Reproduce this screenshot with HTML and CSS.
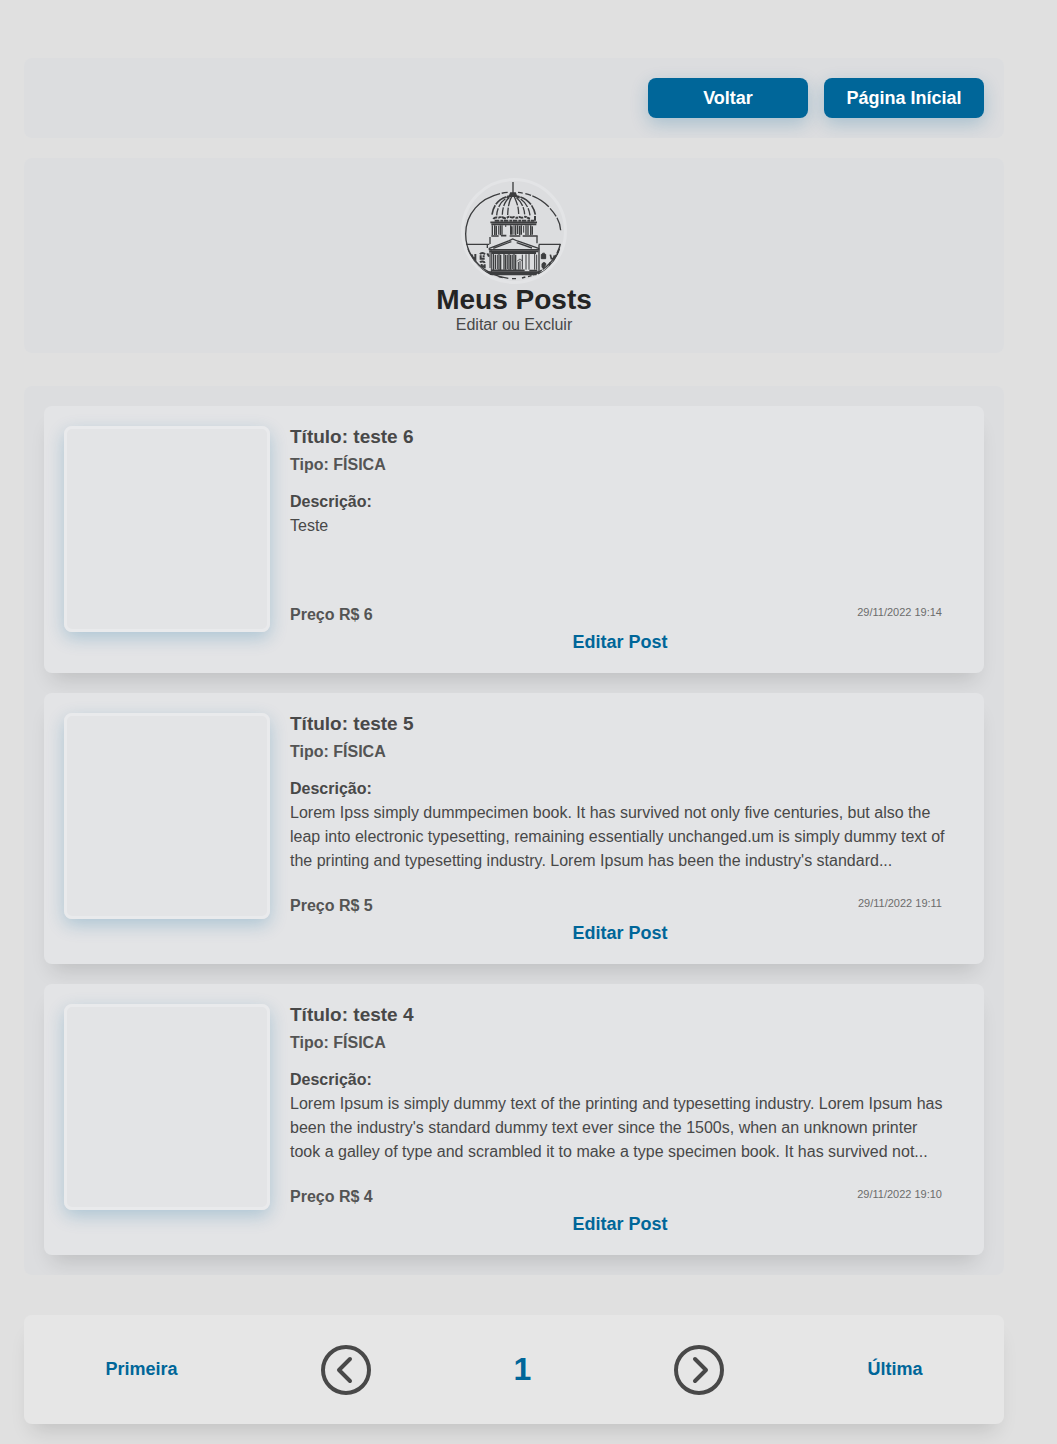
FILE: index.html
```html
<!DOCTYPE html>
<html lang="pt-BR">
<head>
  <meta charset="utf-8">
  <meta name="viewport" content="width=device-width, initial-scale=1">
  <title>Meus Posts</title>
  <link rel="stylesheet" href="styles.css">
</head>
<body>
  <div class="page">
    <nav class="panel topbar">
      <button type="button" class="button">Voltar</button>
      <button type="button" class="button">Página Inícial</button>
    </nav>

    <header class="panel hero">
      <svg class="logo" viewBox="72 63 300 300" fill="none" stroke="#3c3d3f" stroke-width="4" aria-hidden="true">
        <!-- ring -->
        <path d="M203 97C130 104 77 155 77 222C77 299 139 346 205 355" stroke-dasharray="18 5 400"/>
        <path d="M234 97C276 102 306 119 328 142" stroke-dasharray="14 8 18 4 60"/>
        <path d="M330 145C352 169 361 190 362 211M361 252C352 297 306 340 264 350" stroke-dasharray="30 5 60 3"/>
        <path d="M176 350l12 3M216 356h12M246 354l10-3"/>
        <!-- spire and dome -->
        <path d="M219 66V104" stroke-width="4"/>
        <path d="M208 109l4-10h14l4 10z" fill="#3c3d3f"/>
        <path d="M156 164C160 130 185 110 211 108M286 164C280 132 256 111 228 108" stroke-width="5" stroke-dasharray="30 3 40 2"/>
        <path d="M170 166C172 136 190 116 208 110M187 164C188 136 198 118 212 110M203 165C204 138 208 122 215 110M270 166C266 136 249 118 230 110M254 163C252 138 240 120 226 110M236 162C236 138 228 122 223 110" stroke-dasharray="22 4 32 4"/>
        <path d="M160 177c6-9 10-3 16-4s6-4 12-1 9 5 15 0 10 3 16 0 8 4 15 0 8 4 16 0 10 1 20 4M164 182h119" stroke-width="6" stroke-dasharray="14 3 8 2"/>
        <path d="M151 187H291M154 193H289" stroke-width="5"/>
        <path d="M285 168v14" stroke-width="6"/>
        <!-- drum -->
        <path d="M157 196v30M164 196v29M169 197v28M181 196v30M186 196v28M197 196v4M212 196v28M216 199v25M227 196v29M233 196v26M239 197v28M244 196v28M258 196v29M264 196v29M272 196v30M277 199v25"/>
        <path d="M176 197v27M222 196v28M251 198v20" stroke-width="3"/>
        <path d="M154 228H176M183 227h16M209 228h32M248 228h45" stroke-width="5"/>
        <path d="M150 231V252M291 229V250"/>
        <!-- pediment -->
        <path d="M146 266L208 242L218 237L232 243L298 266M160 265l54-20M230 248l46 16"/>
        <path d="M146 269H298"/>
        <path d="M148 274H295M155 279H288" stroke-width="6"/>
        <!-- colonnade -->
        <path d="M160 281v49M166 284v44M177 282v48M182 284v46M192 281v48M197 284v45M207 282v47M212 284v45M222 282v48M227 284v46" stroke-width="4"/>
        <path d="M172 284v44M202 284v43M217 284v43M235 306v23M240 302v27M247 284v44M258 283v46M267 282v47M284 282v47M290 284v45M232 304c5-8 10-8 15-1" stroke-width="3"/>
        <path d="M154 331H254M268 332H292" stroke-width="5"/>
        <path d="M140 337H298M148 343H290" stroke-width="6"/>
        <!-- wings -->
        <path d="M79 253H148M296 253H362M142 255v9M297 254V338"/>
        <path d="M154 271V336M150 272v52" stroke-width="3"/>
        <path d="M94 283l4 8M106 282v16l-8-6M120 283c3-5 11-5 15 0M122 286v10h12M131 286v6M120 307c5-5 13-2 14 2M125 312v6l9 3v-8M142 280l5 10" stroke-width="6"/>
        <path d="M304 296v-12c3-6 11-6 13 0v12zM306 322v-10c3-6 9-6 12 0l-7 13z" fill="#3c3d3f" stroke-width="3"/>
        <path d="M331 284l3 12h7l2-10M331 307l-4 10M306 290h12" stroke-width="5"/>
        <path d="M83 266C92 302 120 332 152 342M358 266C346 304 326 332 294 342" stroke-width="5"/>
      </svg>
      <h1 class="hero-title">Meus Posts</h1>
      <p class="hero-subtitle">Editar ou Excluir</p>
    </header>

    <main class="panel posts">
      <article class="post">
        <div class="post-image"></div>
        <div class="post-body">
          <h2 class="post-title">Título: teste 6</h2>
          <p class="post-type">Tipo: FÍSICA</p>
          <h3 class="post-label">Descrição:</h3>
          <p class="post-text">Teste</p>
          <div class="post-meta">
            <span class="post-price">Preço R$ 6</span>
            <time class="post-date" datetime="2022-11-29T19:14">29/11/2022 19:14</time>
          </div>
          <a class="link post-edit" href="#">Editar Post</a>
        </div>
      </article>

      <article class="post">
        <div class="post-image"></div>
        <div class="post-body">
          <h2 class="post-title">Título: teste 5</h2>
          <p class="post-type">Tipo: FÍSICA</p>
          <h3 class="post-label">Descrição:</h3>
          <p class="post-text">Lorem Ipss simply dummpecimen book. It has survived not only five centuries, but also the leap into electronic typesetting, remaining essentially unchanged.um is simply dummy text of the printing and typesetting industry. Lorem Ipsum has been the industry's standard...</p>
          <div class="post-meta">
            <span class="post-price">Preço R$ 5</span>
            <time class="post-date" datetime="2022-11-29T19:11">29/11/2022 19:11</time>
          </div>
          <a class="link post-edit" href="#">Editar Post</a>
        </div>
      </article>

      <article class="post">
        <div class="post-image"></div>
        <div class="post-body">
          <h2 class="post-title">Título: teste 4</h2>
          <p class="post-type">Tipo: FÍSICA</p>
          <h3 class="post-label">Descrição:</h3>
          <p class="post-text">Lorem Ipsum is simply dummy text of the printing and typesetting industry. Lorem Ipsum has been the industry's standard dummy text ever since the 1500s, when an unknown printer took a galley of type and scrambled it to make a type specimen book. It has survived not...</p>
          <div class="post-meta">
            <span class="post-price">Preço R$ 4</span>
            <time class="post-date" datetime="2022-11-29T19:10">29/11/2022 19:10</time>
          </div>
          <a class="link post-edit" href="#">Editar Post</a>
        </div>
      </article>
    </main>

    <nav class="pager" aria-label="Paginação">
      <a class="link" href="#">Primeira</a>
      <button type="button" class="pager-arrow" aria-label="Anterior">
        <svg viewBox="0 0 50 50" width="50" height="50" fill="none" stroke="#484848" stroke-linecap="round" stroke-linejoin="round" stroke-width="4">
          <circle cx="25" cy="25" r="23"/>
          <path d="M29 14L18 25L29 36"/>
        </svg>
      </button>
      <span class="pager-current">1</span>
      <button type="button" class="pager-arrow" aria-label="Próxima">
        <svg viewBox="0 0 50 50" width="50" height="50" fill="none" stroke="#484848" stroke-linecap="round" stroke-linejoin="round" stroke-width="4">
          <circle cx="25" cy="25" r="23"/>
          <path d="M21 14L32 25L21 36"/>
        </svg>
      </button>
      <a class="link" href="#">Última</a>
    </nav>
  </div>
</body>
</html>
```
FILE: styles.css
```css
* {
  box-sizing: border-box;
  margin: 0;
  padding: 0;
}

body {
  background: #e0e0e0;
  color: #484848;
  font-family: "Liberation Sans", Arial, sans-serif;
  font-size: 16px;
  line-height: 24px;
}

.page {
  display: flex;
  flex-direction: column;
  padding: 58px 53px 20px 24px;
}

.panel {
  background: #dcdddf;
  border-radius: 8px;
  overflow: hidden;
  padding: 20px;
}

.topbar {
  display: flex;
  justify-content: flex-end;
  gap: 16px;
  margin-bottom: 20px;
}

.button {
  width: 160px;
  height: 40px;
  border: 0;
  border-radius: 8px;
  background: #006699;
  box-shadow: 0 6px 18px rgba(0, 102, 153, 0.24);
  color: #fff;
  cursor: pointer;
  font: bold 18px/24px "Liberation Sans", Arial, sans-serif;
}

.hero {
  display: flex;
  flex-direction: column;
  align-items: center;
  margin-bottom: 33px;
}

.logo {
  width: 106px;
  height: 106px;
  border: 3px solid #e3e4e6;
  border-radius: 50%;
}

.hero-title {
  color: #242424;
  font-size: 28px;
  line-height: 32px;
}

.hero-subtitle {
  line-height: 17px;
}

.posts {
  display: flex;
  flex-direction: column;
  gap: 20px;
  margin-bottom: 40px;
}

.post {
  display: flex;
  align-items: flex-start;
  gap: 20px;
  padding: 20px 34px 19px 20px;
  border-radius: 8px;
  background: #e3e4e6;
  box-shadow: 0 14px 20px -8px rgba(0, 0, 0, 0.14);
}

.post-image {
  flex: none;
  width: 206px;
  height: 206px;
  border: 3px solid #e9eaec;
  border-radius: 8px;
  box-shadow: 0 6px 18px rgba(0, 102, 153, 0.24);
}

.post-body {
  display: flex;
  flex: 1;
  flex-direction: column;
  min-width: 0;
  padding-top: 1px;
}

.post-title {
  margin-bottom: 6px;
  font-size: 19px;
  line-height: 20px;
}

.post-type {
  margin-bottom: 13px;
  color: #545454;
  font-weight: bold;
}

.post-label {
  font-size: 16px;
}

.post-text {
  min-height: 68px;
  margin-bottom: 21px;
}

.post-meta {
  display: flex;
  justify-content: space-between;
  margin-bottom: 3px;
  padding-right: 8px;
}

.post-price {
  color: #545454;
  font-weight: bold;
}

.post-date {
  color: #6c6c6c;
  font-size: 11px;
  line-height: 18px;
}

.link {
  color: #006699;
  font-size: 18px;
  font-weight: bold;
  text-decoration: none;
}

.post-edit {
  align-self: center;
}

.pager {
  display: flex;
  align-items: center;
  justify-content: space-around;
  padding: 30px 10px 29px;
  border-radius: 8px;
  background: #e6e6e6;
  box-shadow: 0 14px 20px -8px rgba(0, 0, 0, 0.14);
}

.pager .link,
.pager-current {
  padding-bottom: 2px;
}

.pager-arrow {
  width: 50px;
  height: 50px;
  border: 0;
  background: none;
  cursor: pointer;
}

.pager-arrow svg {
  display: block;
}

.pager-current {
  color: #006699;
  font-size: 32px;
  font-weight: bold;
}
```
